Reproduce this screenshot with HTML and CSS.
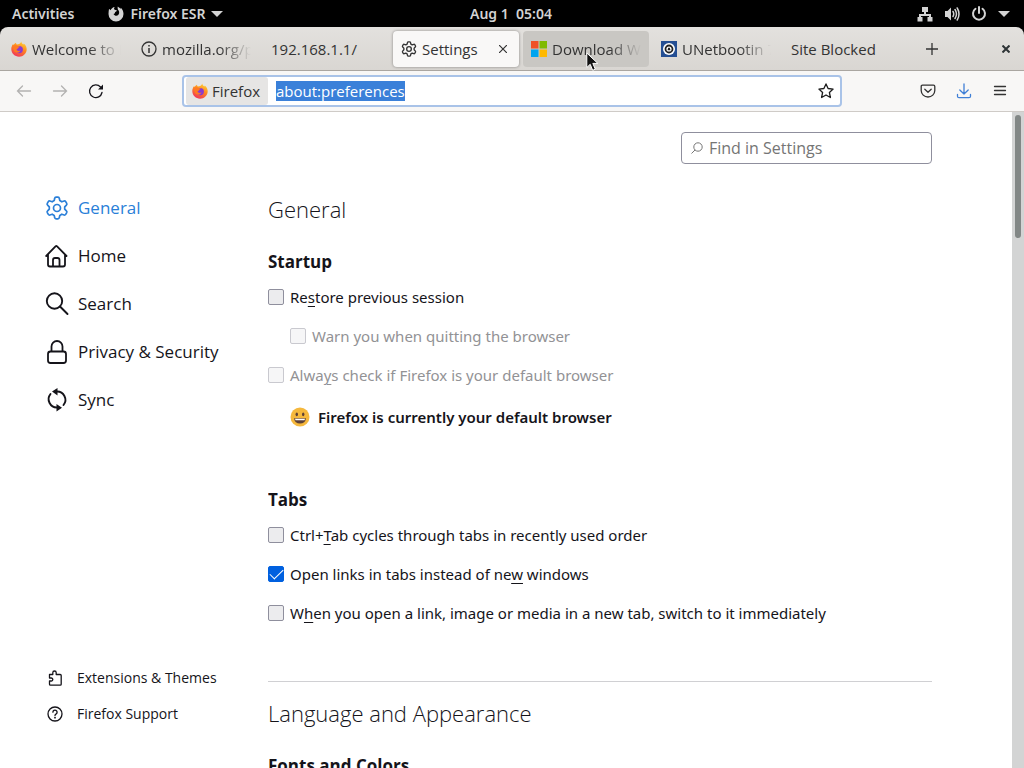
FILE: index.html
```
<!DOCTYPE html>
<html lang="en">
<head>
    <meta charset="UTF-8">
    <meta name="viewport" content="width=device-width, initial-scale=1.0">
    <title>Settings</title>
    <link rel="stylesheet" href="styles.css">
</head>
<body>

    <!-- Shared icon shapes -->
    <svg class="sprite" aria-hidden="true">
        <defs>
            <linearGradient id="flame" x1="0.8" y1="0" x2="0.3" y2="1">
                <stop offset="0" stop-color="#ffd83a"/>
                <stop offset="0.45" stop-color="#ff8a1f"/>
                <stop offset="1" stop-color="#f0325c"/>
            </linearGradient>
        </defs>
        <symbol id="firefox" viewBox="0 0 16 16">
            <path fill="url(#flame)" d="M10.200.4c.2 1.500 1.200 2.100 2.200 3.100.3-.2.4-.7.300-1.100C14.800 4 15.800 6.200 15.700 8.500c-.1 4-3.500 7.200-7.600 7.200C3.800 15.700.4 12.500.3 8.300.2 6.200 1 4.200 2.200 2.900c0 .5.100.9.300 1.200C3.100 3 4 2.200 5 1.800c0 .7.300 1.300.8 1.700C7.800 3.300 9.800 2.300 10.200.4z"/>
            <circle cx="8.200" cy="8.600" r="3.700" fill="#8a3ad0"/>
            <path fill="#ff7a22" d="M2.600 4.900c1.500-1 3.200-.8 4.400.3.500.1 1.400.1 1.800.4-.1.700-1.400 1-1.800 1.500-.2.900-.9 1.200-1.500 1.700.8 1.500 3 1.300 4.100.5-.7 2.300-3.700 3.200-5.500 1.800C2.300 9.800 1.900 7 2.600 4.900z"/>
        </symbol>
        <symbol id="gear" viewBox="0 0 24 24">
            <path fill="none" stroke="currentColor" stroke-linejoin="round" d="M11 1.200h2q1.100 0 1.300 1.100l.5 2.300 2 1.200 2.300-.8q1-.3 1.600.6l1 1.800q.5 1-.3 1.700L19.700 10.800v2.400l1.700 1.700q.8.7.3 1.700l-1 1.800q-.6.9-1.600.6l-2.300-.8-2 1.200-.5 2.300q-.2 1.100-1.300 1.100h-2q-1.100 0-1.300-1.100l-.5-2.300-2-1.200-2.300.8q-1 .3-1.600-.6l-1-1.800q-.5-1 .3-1.700l1.700-1.700v-2.400L2.600 9.100q-.8-.7-.3-1.700l1-1.800q.6-.9 1.600-.6l2.300.8 2-1.200.5-2.300q.2-1.100 1.300-1.100z"/>
            <circle cx="12" cy="12" r="3.500" fill="none" stroke="currentColor"/>
        </symbol>
    </svg>

    <header class="top-bar">
        <div class="top-left">
            <button type="button">Activities</button>
            <button type="button" class="app-menu">
                <svg width="16" height="16" viewBox="0 0 16 16"><path fill="#d3d3d3" d="M1 3c.8.100 1.300.6 1.500 1.200C3.500 2.400 5 1.200 6.700 1 6 1.800 5.900 2.900 6.400 3.600c.5.5 1.700.3 2.400.8-.1 1-1.500 1.300-1.800 1.800.3 1-.9 1.600-1.500 1.800 1 2 3.600 2.300 4.900.8 1.300-1.600.9-3.800-.4-5C9.700 3 9.500 1.700 9.800.6c1 1.200 2.300 1.500 3 2.400V1.700c1.700 1.500 2.700 3.700 2.700 6.200a7.500 7.500 0 0 1-15 0C.5 6 .8 4.400 1 3z"/></svg>
                Firefox ESR
                <svg width="12" height="6" viewBox="0 0 12 6"><path fill="#d3d3d3" d="M0 0h12L6 6z"/></svg>
            </button>
        </div>
        <span class="clock">Aug 1&nbsp; 05:04</span>
        <div class="system">
            <svg width="16" height="16" viewBox="0 0 16 16"><path fill="#d3d3d3" d="M5 1h6v5H9v2h5v3h1.500v4.500h-5V11H12v-1H4v1h1.500v4.500h-5V11H2V8h5V6H5z"/></svg>
            <svg width="16" height="16" viewBox="0 0 16 16"><path fill="#d3d3d3" d="M1 5h2.500L7 1.500v13L3.500 11H1z"/><path fill="none" stroke="#d3d3d3" stroke-width="1.500" stroke-linecap="round" d="M9 5.500q1.500 2.500 0 5M11 3.500q3 4.500 0 9M13.200 2q3.600 6 0 12"/></svg>
            <svg width="16" height="16" viewBox="0 0 16 16"><path fill="none" stroke="#d3d3d3" stroke-width="2" stroke-linecap="round" d="M8 1v6M4.500 2.800a6 6 0 1 0 7 0"/></svg>
            <svg width="12" height="6" viewBox="0 0 12 6"><path fill="#d3d3d3" d="M0 0h12L6 6z"/></svg>
        </div>
    </header>

    <div class="tab-strip">
        <div class="tabs" role="tablist">
            <div class="tab" role="tab">
                <svg width="16" height="16"><use href="#firefox"/></svg>
                <span class="tab-label fade">Welcome to F</span>
            </div>
            <div class="tab" role="tab">
                <svg width="16" height="16" viewBox="0 0 16 16"><circle cx="8" cy="8" r="7" fill="none" stroke="#333" stroke-width="1.300"/><path stroke="#333" stroke-width="1.500" d="M8 7v5M8 4v1.500"/></svg>
                <span class="tab-label fade">mozilla.org/p</span>
            </div>
            <div class="tab" role="tab"><span class="tab-label">192.168.1.1/</span></div>
            <div class="tab active" role="tab" aria-selected="true">
                <svg width="16" height="16" stroke-width="2"><use href="#gear"/></svg>
                <span class="tab-label">Settings</span>
                <button type="button" aria-label="Close tab">
                    <svg width="8" height="8" viewBox="0 0 8 8"><path stroke="#333" stroke-width="1.200" d="M0 0l8 8M8 0L0 8"/></svg>
                </button>
            </div>
            <div class="tab hovered" role="tab">
                <svg width="16" height="16" viewBox="0 0 16 16"><path fill="#f05125" d="M0 0h7.500v7.500H0z"/><path fill="#7fba00" d="M8.500 0H16v7.500H8.500z"/><path fill="#00a4ef" d="M0 8.500h7.500V16H0z"/><path fill="#ffb900" d="M8.500 8.500H16V16H8.500z"/></svg>
                <span class="tab-label fade">Download W</span>
            </div>
            <div class="tab" role="tab">
                <svg width="16" height="16" viewBox="0 0 16 16"><path fill="#254f93" d="M0 0h16v16H0z"/><circle cx="8" cy="8" r="6" fill="#fff"/><circle cx="8" cy="8" r="3.500" fill="none" stroke="#222" stroke-width="1.800"/><path fill="#222" d="M7.200 6.800h1.600l.7 2.400h-3z"/></svg>
                <span class="tab-label fade">UNetbootin 7</span>
            </div>
            <div class="tab" role="tab"><span class="tab-label">Site Blocked</span></div>
        </div>
        <button type="button" class="new-tab" aria-label="New tab">
            <svg width="12" height="12" viewBox="0 0 12 12"><path stroke="#333" stroke-width="1.300" d="M6 0v12M0 6h12"/></svg>
        </button>
        <button type="button" class="window-close" aria-label="Close window">
            <svg width="8" height="8" viewBox="0 0 8 8"><path stroke="#2e3436" stroke-width="2" d="M.5.5l7 7M7.500.5l-7 7"/></svg>
        </button>
    </div>

    <div class="toolbar">
        <div class="nav-buttons">
            <button type="button" aria-label="Back" disabled><svg width="16" height="16" viewBox="0 0 16 16"><path fill="none" stroke="currentColor" stroke-width="1.300" stroke-linecap="round" d="M14.500 8h-13M6.500 3L1.500 8l5 5"/></svg></button>
            <button type="button" aria-label="Forward" disabled><svg width="16" height="16" viewBox="0 0 16 16"><path fill="none" stroke="currentColor" stroke-width="1.300" stroke-linecap="round" d="M1.500 8h13M9.500 3l5 5-5 5"/></svg></button>
            <button type="button" aria-label="Reload"><svg width="16" height="16" viewBox="0 0 16 16"><path fill="none" stroke="currentColor" stroke-width="1.300" stroke-linecap="round" d="M14 9.500A6.300 6.300 0 1 1 12.500 4"/><path fill="currentColor" d="M15 1.500v5h-5z"/></svg></button>
        </div>
        <div class="url-bar">
            <span class="identity"><svg width="16" height="16"><use href="#firefox"/></svg>Firefox</span>
            <input type="text" id="url" class="url-input" value="about:preferences" aria-label="Address" autofocus>
            <button type="button" aria-label="Bookmark this page"><svg width="16" height="16" viewBox="0 0 16 16"><path fill="none" stroke="#1c1c1c" stroke-width="1.300" stroke-linejoin="round" d="M8 .9l2.100 4.600 5 .6-3.700 3.400 1 5L8 12l-4.400 2.500 1-5L.9 6.100l5-.6z"/></svg></button>
        </div>
        <div class="tool-buttons">
            <button type="button" aria-label="Pocket"><svg width="16" height="16" viewBox="0 0 16 16"><path fill="none" stroke="#333" stroke-width="1.300" stroke-linecap="round" stroke-linejoin="round" d="M2.500 2.200h11q1.300 0 1.300 1.300V7.500a6.800 6.500 0 0 1-13.600 0V3.500q0-1.300 1.300-1.300zM4.800 6.300L8 9.300l3.200-3"/></svg></button>
            <button type="button" aria-label="Downloads"><svg width="16" height="16" viewBox="0 0 16 16"><path fill="none" stroke="#3f7fd6" stroke-width="1.300" stroke-linecap="round" stroke-linejoin="round" d="M8 1v10M3.800 7L8 11l4.200-4M1.500 11.500v1.700q0 1.500 1.500 1.500h10q1.500 0 1.500-1.500v-1.700"/></svg></button>
            <button type="button" aria-label="Menu"><svg width="16" height="16" viewBox="0 0 16 16"><path stroke="#333" stroke-width="1.300" stroke-linecap="round" d="M2.500 3.500h11M2.500 7.500h11M2.500 11.500h11"/></svg></button>
        </div>
    </div>

    <div class="page">
        <nav class="sidebar">
            <div class="categories">
                <a href="#general" class="category selected">
                    <svg width="24" height="24" stroke-width="1.700"><use href="#gear"/></svg>General
                </a>
                <a href="#home" class="category">
                    <svg width="24" height="24" viewBox="0 0 24 24"><path fill="none" stroke="currentColor" stroke-width="1.800" stroke-linecap="round" stroke-linejoin="round" d="M1.200 12L10.500 2.400q.8-.7 1.600 0L21.500 12M3 10.500v10q0 2 2 2h13q2 0 2-2v-10M8 22v-6q0-2 2-2h2.500q2 0 2 2v6"/></svg>Home
                </a>
                <a href="#search" class="category">
                    <svg width="24" height="24" viewBox="0 0 24 24"><circle cx="9.500" cy="9" r="7.700" fill="none" stroke="currentColor" stroke-width="1.900"/><path stroke="currentColor" stroke-width="1.900" stroke-linecap="round" d="M15 14.500l7.500 7.500"/></svg>Search
                </a>
                <a href="#privacy" class="category">
                    <svg width="24" height="24" viewBox="0 0 24 24"><rect x="3" y="11.500" width="18" height="11.500" rx="2.500" fill="none" stroke="currentColor" stroke-width="1.800"/><path fill="none" stroke="currentColor" stroke-width="1.800" d="M6.500 11.500V6.500a5.500 5.500 0 0 1 11 0v5"/></svg>Privacy &amp; Security
                </a>
                <a href="#sync" class="category">
                    <svg width="24" height="24" viewBox="0 0 24 24"><path fill="none" stroke="currentColor" stroke-width="1.900" stroke-linecap="round" d="M11.500 3.500a8.300 8.300 0 0 1 7 13.500M12.500 19.500A8.300 8.300 0 0 1 5.500 6"/><path fill="currentColor" d="M7 3.500l5.500-3.500v7.500zM17 19.800l-5.500 3.700V16z"/></svg>Sync
                </a>
            </div>
            <div class="shortcuts">
                <a href="#extensions" class="shortcut">
                    <svg width="16" height="16" viewBox="0 0 16 16"><path fill="none" stroke="currentColor" stroke-width="1.300" stroke-linejoin="round" d="M2.500 4.500h3.300V2.700a1.700 1.700 0 0 1 3.400 0v1.800h4q1 0 1 1v8.700q0 1-1 1H3.500q-1 0-1-1V11h1.800a1.500 1.500 0 0 0 0-3H2.500z"/></svg>Extensions &amp; Themes
                </a>
                <a href="#support" class="shortcut">
                    <svg width="16" height="16" viewBox="0 0 16 16"><circle cx="8" cy="8" r="7" fill="none" stroke="currentColor" stroke-width="1.300"/><path fill="none" stroke="currentColor" stroke-width="1.300" stroke-linecap="round" d="M5.900 6.200a2.100 2.100 0 1 1 3.300 1.700Q8 8.600 8 9.600"/><circle cx="8" cy="11.700" r=".9" fill="currentColor"/></svg>Firefox Support
                </a>
            </div>
        </nav>

        <main class="pane">
            <div class="search-box">
                <svg width="12" height="12" viewBox="0 0 12 12"><circle cx="7" cy="5" r="4.200" fill="none" stroke="#777"/><path stroke="#777" d="M4 8L.5 11.500"/></svg>
                <input type="search" placeholder="Find in Settings" aria-label="Find in Settings">
            </div>

            <h1>General</h1>

            <section class="startup">
                <h2>Startup</h2>
                <label class="check"><input type="checkbox"><span>Re<u>s</u>tore previous session</span></label>
                <label class="check indent off"><input type="checkbox" disabled><span>Warn you when quitting the browser</span></label>
                <label class="check off"><input type="checkbox" disabled><span>Alwa<u>y</u>s check if Firefox is your default browser</span></label>
                <p class="default-note">
                    <svg width="20" height="20" viewBox="0 0 20 20"><circle cx="10" cy="10" r="9.500" fill="#f5b83d"/><ellipse cx="6.800" cy="7.300" rx="1.200" ry="1.900" fill="#5d4037"/><ellipse cx="13.200" cy="7.300" rx="1.200" ry="1.900" fill="#5d4037"/><path fill="#5d4037" d="M4 11.300h12q-.8 5.200-6 5.200t-6-5.200z"/><path fill="#fff" d="M5 11.800h10l-.5 1.400h-9z"/></svg>
                    Firefox is currently your default browser
                </p>
            </section>

            <section>
                <h2>Tabs</h2>
                <label class="check"><input type="checkbox"><span>Ctrl+<u>T</u>ab cycles through tabs in recently used order</span></label>
                <label class="check"><input type="checkbox" checked><span>Open links in tabs instead of ne<u>w</u> windows</span></label>
                <label class="check"><input type="checkbox"><span>W<u>h</u>en you open a link, image or media in a new tab, switch to it immediately</span></label>
            </section>

            <h1 class="ruled">Language and Appearance</h1>

            <section>
                <h2>Fonts and Colors</h2>
            </section>
        </main>

        <div class="scrollbar"><div class="thumb"></div></div>
    </div>

    <svg class="pointer" width="13" height="20" viewBox="0 0 13 20"><path fill="#111" stroke="#fff" d="M.8 1v14.500l3.400-3.200 2.500 6 2.600-1.100-2.500-5.800h5z"/></svg>

    <script>
        // Select the whole address, as after opening the tab
        document.getElementById('url').select();
    </script>

</body>
</html>
```
FILE: styles.css
```
* {
    box-sizing: border-box;
}

body {
    font-family: 'Open Sans', 'Noto Sans', sans-serif;
    font-size: 15px;
    line-height: 20px;
    color: #15141a;
    background-color: #000;
    margin: 0;
    height: 100vh;
    display: flex;
    flex-direction: column;
    overflow: hidden;
}

button {
    font: inherit;
    color: inherit;
    background: none;
    border: none;
    padding: 0;
    display: flex;
    align-items: center;
    justify-content: center;
}

svg {
    flex-shrink: 0;
}

.sprite {
    position: absolute;
    width: 0;
    height: 0;
}

/* Desktop top bar */
.top-bar {
    height: 27px;
    flex-shrink: 0;
    display: grid;
    grid-template-columns: 1fr auto 1fr;
    align-items: center;
    padding: 0 14px 0 12px;
    background-color: #000;
    color: #d3d3d3;
    font-family: 'Noto Sans', sans-serif;
    font-size: 14px;
    font-weight: 600;
}

.top-left {
    display: flex;
    gap: 34px;
}

.app-menu {
    gap: 6px;
}

.system {
    display: flex;
    align-items: center;
    justify-self: end;
    gap: 11px;
}

/* Tabs */
.tab-strip {
    height: 44px;
    flex-shrink: 0;
    display: flex;
    align-items: center;
    padding: 0 14px 0 3px;
    background-image: linear-gradient(#e3e1de, #d9d6d2);
    border-bottom: 1px solid #aaa6a1;
    border-radius: 8px 8px 0 0;
    color: #333;
}

.tabs {
    display: flex;
    gap: 4px;
}

.tab {
    width: 126px;
    height: 36px;
    display: flex;
    align-items: center;
    gap: 5px;
    padding: 0 8px;
    border-radius: 4px;
}

.tab-label {
    flex: 1;
    overflow: hidden;
    white-space: nowrap;
}

.fade {
    mask-image: linear-gradient(to left, transparent, #000 32px);
}

.tab.active {
    padding-right: 12px;
    background-color: #f9f8f7;
    box-shadow: 0 0 3px rgba(0, 0, 0, 0.4);
}

.tab.hovered {
    background-color: #c9c7c3;
}

.new-tab {
    margin-left: 17px;
}

.window-close {
    margin-left: auto;
}

/* Address bar */
.toolbar {
    height: 41px;
    flex-shrink: 0;
    display: flex;
    align-items: center;
    justify-content: space-between;
    padding: 0 16px;
    background-color: #f8f7f6;
    border-bottom: 1px solid #cfcbc7;
}

.nav-buttons,
.tool-buttons {
    display: flex;
    gap: 20px;
}

.nav-buttons button:disabled {
    color: #b3b2b1;
}

.url-bar {
    width: 660px;
    height: 32px;
    display: flex;
    align-items: center;
    padding: 0 6px 0 2px;
    background-color: #fff;
    border: 2px solid #a9c3e8;
    border-radius: 4px;
}

.identity {
    display: flex;
    align-items: center;
    gap: 4px;
    height: 28px;
    padding: 0 8px 0 6px;
    background-color: #e6e5e4;
    border-radius: 3px;
    color: #333;
}

.url-input {
    flex: 1;
    min-width: 0;
    font: inherit;
    color: #15141a;
    background: none;
    border: none;
    outline: none;
    padding: 0 8px;
}

.url-input::selection {
    color: #fff;
    background-color: #3a80d9;
}

/* Settings page */
.page {
    flex: 1;
    min-height: 0;
    display: flex;
    background-color: #fff;
}

.sidebar {
    width: 268px;
    flex-shrink: 0;
    display: flex;
    flex-direction: column;
    justify-content: space-between;
    padding: 72px 0 36px 45px;
}

.category,
.shortcut {
    display: flex;
    align-items: center;
    color: #15141a;
    text-decoration: none;
}

.category {
    height: 48px;
    gap: 9px;
    font-size: 17px;
}

.category.selected {
    color: #2a7fd8;
}

.shortcut {
    height: 36px;
    gap: 14px;
    padding-left: 2px;
    font-size: 14px;
}

.pane {
    flex: 1;
    max-width: 664px;
    padding-top: 20px;
    overflow: hidden;
}

.search-box {
    display: flex;
    align-items: center;
    gap: 6px;
    width: 251px;
    height: 32px;
    margin-left: auto;
    padding: 0 9px;
    border: 1px solid #8f8f9d;
    border-radius: 4px;
}

.search-box input {
    flex: 1;
    min-width: 0;
    font-family: inherit;
    font-size: 16px;
    padding: 0;
    border: none;
    outline: none;
    background: none;
}

.search-box input::placeholder {
    color: #757575;
}

h1 {
    font-size: 22px;
    font-weight: 300;
    line-height: 32px;
    margin: 29px 0 21px;
}

h1.ruled {
    margin-top: 52px;
    padding-top: 15px;
    border-top: 1px solid #d0d0d3;
}

h2 {
    font-size: 17px;
    font-weight: 700;
    line-height: 32px;
    margin: 0 0 3px;
}

.startup {
    margin-bottom: 51px;
}

.check {
    display: flex;
    align-items: center;
    gap: 6px;
    height: 32px;
    margin-bottom: 7px;
    font-family: 'Noto Sans', sans-serif;
}

.check.indent {
    margin-left: 22px;
}

.check.off {
    color: #929295;
}

.check input {
    appearance: none;
    width: 16px;
    height: 16px;
    margin: 0;
    background-color: #ececee;
    border: 1px solid #8f8f9d;
    border-radius: 2px;
}

.check input:disabled {
    background-color: #f6f6f7;
    border-color: #c9c9cf;
}

.check input:checked {
    display: grid;
    place-items: center;
    background-color: #0060df;
    border-color: #0060df;
}

.check input:checked::after {
    content: "";
    width: 12px;
    height: 6px;
    border-left: 1px solid #fff;
    border-bottom: 1px solid #fff;
    rotate: -45deg;
    translate: 0 -2px;
}

.check u {
    text-underline-offset: 3px;
}

.default-note {
    display: flex;
    align-items: center;
    gap: 8px;
    height: 32px;
    margin: 10px 0 0 22px;
    font-family: 'Noto Sans', sans-serif;
    font-weight: 600;
}

.scrollbar {
    width: 12px;
    margin-left: auto;
    padding: 3px;
    background-color: #d3d4d4;
}

.thumb {
    height: 123px;
    background-color: #828786;
    border-radius: 3px;
}

/* Mouse pointer over the tabs */
.pointer {
    position: absolute;
    left: 586px;
    top: 52px;
}
```
